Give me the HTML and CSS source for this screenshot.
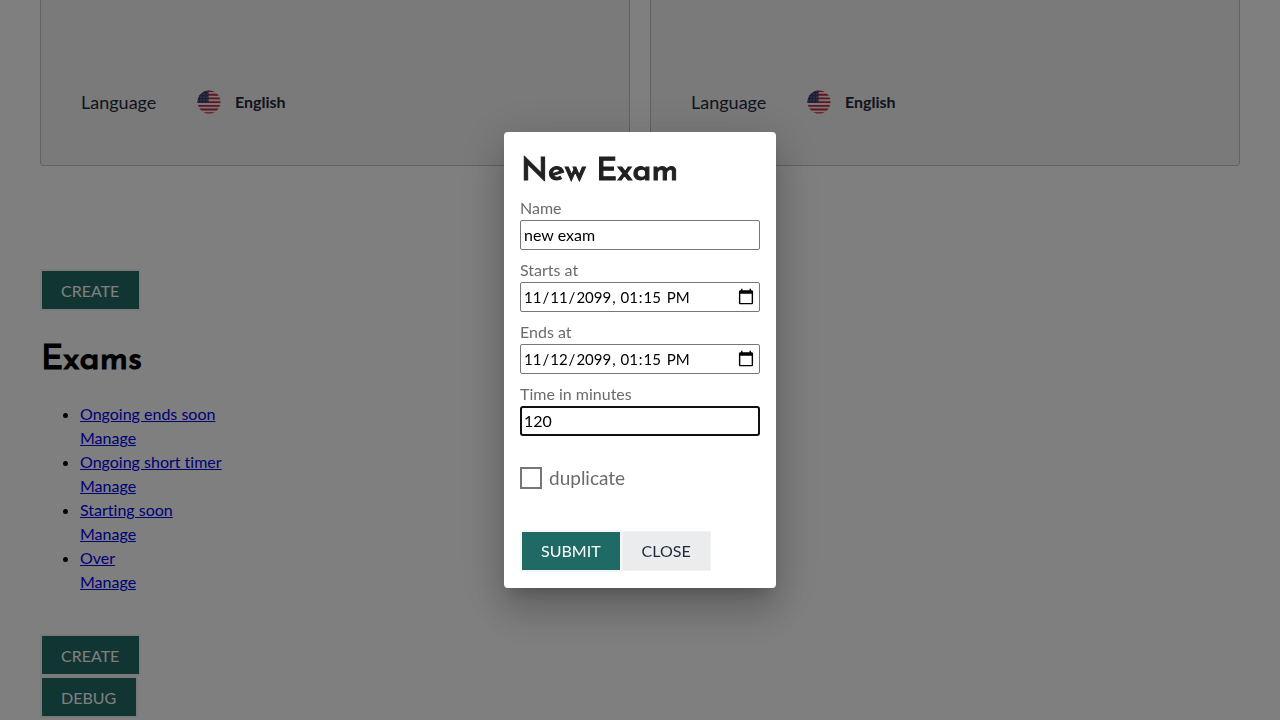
FILE: index.html
```html
<!DOCTYPE html>
<html lang="en">
<head>
<meta charset="utf-8">
<title>Exams</title>
<link rel="stylesheet" href="styles.css">
</head>
<body>
<svg class="defs" width="0" height="0" aria-hidden="true">
  <defs>
    <clipPath id="round"><circle cx="12" cy="12" r="11.5"/></clipPath>
    <pattern id="stars" width="3" height="3" patternUnits="userSpaceOnUse">
      <rect width="3" height="3" fill="#3c3b6e"/>
      <circle cx="1" cy="1" r="0.5" fill="#d8d8e8"/>
    </pattern>
    <symbol id="flag" viewBox="0 0 24 24">
      <g clip-path="url(#round)">
        <rect width="24" height="24" fill="#eeeeee"/>
        <path d="M0 1h24M0 4.7h24M0 8.4h24M0 12.1h24M0 15.8h24M0 19.5h24M0 23.2h24" stroke="#c8283c" stroke-width="1.85"/>
        <rect width="11.5" height="13" fill="url(#stars)"/>
      </g>
    </symbol>
  </defs>
</svg>
<main class="page">
  <section class="cards">
    <div class="card">
      <span class="card-label">Language</span>
      <svg class="flag" aria-hidden="true"><use href="#flag"/></svg>
      <strong class="language">English</strong>
    </div>
    <div class="card">
      <span class="card-label">Language</span>
      <svg class="flag" aria-hidden="true"><use href="#flag"/></svg>
      <strong class="language">English</strong>
    </div>
  </section>
  <button class="button" type="button">CREATE</button>
  <h1 class="heading">Exams</h1>
  <ul class="exams">
    <li><a href="#">Ongoing ends soon</a><br><a href="#">Manage</a></li>
    <li><a href="#">Ongoing short timer</a><br><a href="#">Manage</a></li>
    <li><a href="#">Starting soon</a><br><a href="#">Manage</a></li>
    <li><a href="#">Over</a><br><a href="#">Manage</a></li>
  </ul>
  <div class="stack">
    <button class="button" type="button">CREATE</button>
    <button class="button" type="button">DEBUG</button>
  </div>
</main>
<div class="backdrop">
  <form class="dialog" role="dialog" aria-labelledby="dialog-title">
    <h2 class="dialog-title" id="dialog-title">New Exam</h2>
    <div class="field">
      <label for="name">Name</label>
      <input class="input" id="name" type="text" value="new exam">
    </div>
    <div class="field">
      <label for="starts">Starts at</label>
      <input class="input input-date" id="starts" type="datetime-local" value="2099-11-11T13:15">
    </div>
    <div class="field">
      <label for="ends">Ends at</label>
      <input class="input input-date" id="ends" type="datetime-local" value="2099-11-12T13:15">
    </div>
    <div class="field">
      <label for="minutes">Time in minutes</label>
      <input class="input input-active" id="minutes" type="text" inputmode="numeric" value="120">
    </div>
    <div class="check">
      <input class="checkbox" id="duplicate" type="checkbox">
      <label for="duplicate">duplicate</label>
    </div>
    <div class="actions">
      <button class="button button-submit" type="submit">SUBMIT</button>
      <button class="button button-plain" type="button">CLOSE</button>
    </div>
  </form>
</div>
</body>
</html>
```
FILE: styles.css
```css
* {
  box-sizing: border-box;
}

body {
  margin: 0;
  height: 100vh;
  overflow: hidden;
  background: #ffffff;
  color: #000000;
  font: 16px/24px Lato, sans-serif;
  font-variant-ligatures: none;
}

.defs {
  position: absolute;
}

.page {
  padding: 0 40px;
}

.cards {
  display: grid;
  grid-template-columns: 1fr 1fr;
  gap: 20px;
  margin-bottom: 103px;
}

.card {
  display: flex;
  align-items: center;
  padding: 90px 40px 51px;
  border: 1px solid #c4c4c4;
  border-top: 0;
  border-radius: 0 0 4px 4px;
  background: #f4f4f4;
  color: #1e293b;
}

.card-label {
  width: 116px;
  font-size: 18px;
}

.flag {
  width: 24px;
  height: 24px;
  margin-right: 14px;
}

.language {
  font-weight: 700;
}

.button {
  display: block;
  height: 42px;
  padding: 1px 20px 0 19px;
  border: 2px solid #f3f5f6;
  background: #206a65;
  color: #ffffff;
  font: 16px/24px Lato, sans-serif;
}

.button-submit {
  padding: 0 19px;
}

.button-plain {
  height: 40px;
  padding: 0 19px;
  border: 1px solid #f1f2f4;
  background: #ebecee;
  color: #1e293b;
}

.heading,
.dialog-title {
  padding-left: 1px;
  font: 500 34px/48px "Josefin Sans", Lato, sans-serif;
  -webkit-text-stroke: 1px currentColor;
}

.heading {
  margin: 26px 0 17px;
}

.exams {
  margin: 0 0 40px;
  padding-left: 40px;
}

.exams a {
  color: #0000ee;
}

.backdrop {
  position: fixed;
  inset: 0;
  display: flex;
  align-items: center;
  justify-content: center;
  background: rgba(0, 0, 0, 0.5);
}

.dialog {
  padding: 16px;
  border-radius: 4px;
  background: #ffffff;
  color: #6b6b6b;
  box-shadow: 0 11px 15px -7px rgba(0, 0, 0, 0.2), 0 24px 38px 3px rgba(0, 0, 0, 0.14), 0 9px 46px 8px rgba(0, 0, 0, 0.12);
}

.dialog-title {
  margin: 0;
  color: #212121;
  font-size: 32px;
}

.field {
  display: flex;
  flex-direction: column;
  margin-bottom: 8px;
}

.input {
  width: 240px;
  height: 30px;
  padding: 0 3px 2px;
  border: 1px solid #767676;
  border-radius: 2px;
  outline: 0;
  background: #ffffff;
  color: #000000;
  font: 16px/24px Lato, sans-serif;
}

.input-date {
  padding: 1px 2px;
  font-size: 15px;
}

.input-date::-webkit-calendar-picker-indicator {
  width: 18px;
  height: 18px;
}

.input-active {
  padding: 0 2px 2px;
  border: 2px solid #101010;
  border-radius: 3px;
}

.check {
  display: flex;
  align-items: center;
  gap: 7px;
  padding: 22px 0 40px;
  font-size: 19px;
}

.checkbox {
  width: 22px;
  height: 22px;
  margin: 0;
  appearance: none;
  border: 2px solid #767676;
  background: #ffffff;
}

.actions {
  display: flex;
  align-items: center;
}
```
